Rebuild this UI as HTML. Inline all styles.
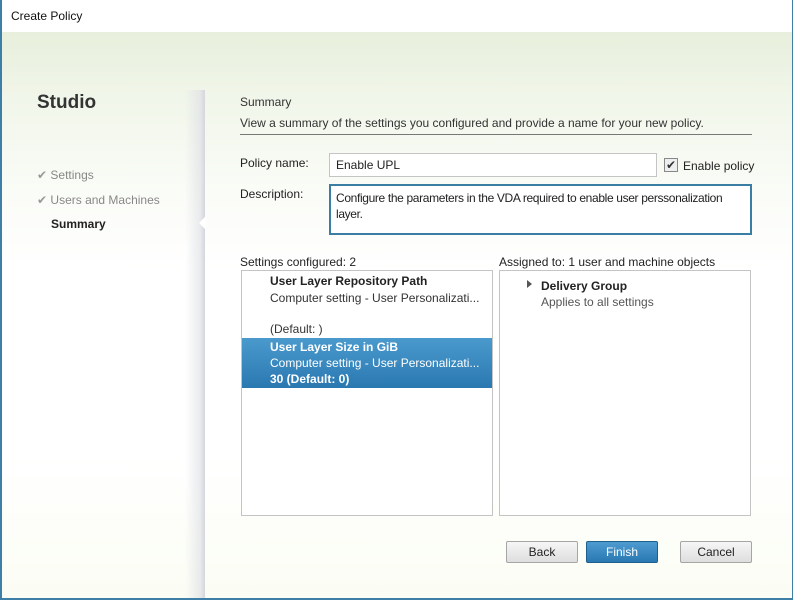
<!DOCTYPE html>
<html><head><meta charset="utf-8"><style>
*{margin:0;padding:0;box-sizing:border-box}
body{width:793px;height:600px;overflow:hidden;font-family:"Liberation Sans",sans-serif;font-size:12px;color:#222;background:#fff;position:relative}
.win{position:absolute;left:0;top:0;width:793px;height:600px;border-left:2px solid #3d7fa6;border-bottom:2px solid #3d7fa6;border-right:1px solid #3d7fa6;z-index:5}
.title{position:absolute;left:2px;top:0;right:1px;height:32px;background:#fff}
.title span{position:absolute;left:9px;top:9px;font-size:12px;color:#111}
.bg{position:absolute;left:2px;top:32px;right:1px;bottom:2px;background:linear-gradient(180deg,#e8efdc 0%,#f1f6ea 12%,#fafcf7 28%,#fff 42%,#fff 75%,#fbfdf4 100%)}
.shadow{position:absolute;left:185px;top:90px;width:20px;bottom:2px;background:linear-gradient(90deg,rgba(225,228,232,0) 0%,rgba(220,222,228,.6) 75%,#d4d6dc 100%)}
.arrow{position:absolute;left:199px;top:216px;width:0;height:0;border-top:7px solid transparent;border-bottom:7px solid transparent;border-right:7px solid #fff}
.abs{position:absolute;white-space:nowrap}
.studio{left:37px;top:92px;font-size:19px;font-weight:bold;color:#333}
.nav{color:#888;font-size:12px}
.chk{color:#999}
.box{position:absolute;background:#fff;border:1px solid #c4c4c4}
.btn{position:absolute;height:22px;border:1px solid #a6a6a6;border-radius:2px;background:linear-gradient(#f6f6f6,#dedede);text-align:center;line-height:20px;color:#222}
</style></head><body>
<div class="win"></div>
<div class="title"><span>Create Policy</span></div>
<div class="bg"></div>
<div class="shadow"></div>
<div class="arrow"></div>
<div class="abs studio">Studio</div>
<div class="abs nav" style="left:37px;top:168px"><span class="chk">✔</span> Settings</div>
<div class="abs nav" style="left:37px;top:193px"><span class="chk">✔</span> Users and Machines</div>
<div class="abs" style="left:51px;top:217px;font-weight:bold;color:#222">Summary</div>

<div class="abs" style="left:240px;top:95px;color:#333">Summary</div>
<div class="abs" style="left:240px;top:116px;color:#333">View a summary of the settings you configured and provide a name for your new policy.</div>
<div class="abs" style="left:240px;top:134px;width:512px;height:1px;background:#777"></div>

<div class="abs" style="left:240px;top:156px">Policy name:</div>
<div class="box" style="left:329px;top:153px;width:328px;height:24px"><span class="abs" style="left:6px;top:4px">Enable UPL</span></div>
<div class="abs" style="left:664px;top:158px;width:14px;height:14px;border:1px solid #888;background:#eee;font-size:12px;line-height:12px;text-align:center;color:#333">✔</div>
<div class="abs" style="left:683px;top:159px">Enable policy</div>

<div class="abs" style="left:240px;top:187px">Description:</div>
<div class="box" style="left:329px;top:184px;width:423px;height:51px;border:2px solid #3b7ea3"><div style="position:absolute;left:5px;top:4px;width:416px;line-height:16px;letter-spacing:-0.35px;white-space:nowrap">Configure the parameters in the VDA required to enable user perssonalization<br>layer.</div></div>

<div class="abs" style="left:240px;top:255px">Settings configured: 2</div>
<div class="box" style="left:241px;top:270px;width:252px;height:246px">
 <div class="abs" style="left:28px;top:3px;font-weight:bold;color:#222">User Layer Repository Path</div>
 <div class="abs" style="left:28px;top:20px;color:#333">Computer setting - User Personalizati...</div>
 <div class="abs" style="left:28px;top:51px;color:#333">(Default: )</div>
 <div class="abs" style="left:0;top:67px;width:250px;height:50px;background:linear-gradient(#4a9ace,#2a78b0)"></div>
 <div class="abs" style="left:28px;top:69px;font-weight:bold;color:#fff">User Layer Size in GiB</div>
 <div class="abs" style="left:28px;top:85px;color:#fff">Computer setting - User Personalizati...</div>
 <div class="abs" style="left:28px;top:101px;color:#fff;font-weight:bold">30 (Default: 0)</div>
</div>

<div class="abs" style="left:499px;top:255px">Assigned to: 1 user and machine objects</div>
<div class="box" style="left:499px;top:270px;width:252px;height:246px">
 <div class="abs" style="left:27px;top:9px;width:0;height:0;border-top:4px solid transparent;border-bottom:4px solid transparent;border-left:5px solid #555"></div>
 <div class="abs" style="left:41px;top:8px;font-weight:bold">Delivery Group</div>
 <div class="abs" style="left:41px;top:24px;color:#555">Applies to all settings</div>
</div>

<div class="btn" style="left:506px;top:541px;width:72px">Back</div>
<div class="btn" style="left:586px;top:541px;width:72px;border-color:#1f5f8b;background:linear-gradient(#4d9bd0,#2a78b2);color:#fff">Finish</div>
<div class="btn" style="left:680px;top:541px;width:72px">Cancel</div>
</body></html>
